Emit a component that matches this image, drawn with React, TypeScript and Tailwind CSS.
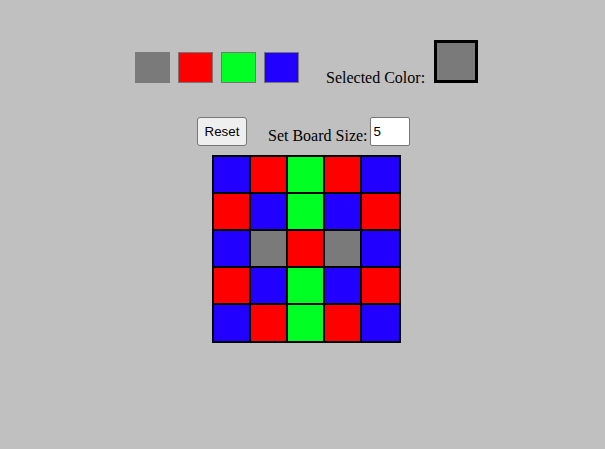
import React, { useState } from 'react';

const GRAY = '#7a7a7a';
const RED = '#ff0000';
const GREEN = '#00ff22';
const BLUE = '#2200ff';

const palette = [GRAY, RED, GREEN, BLUE];

const startBoard = [
  [BLUE, RED, GREEN, RED, BLUE],
  [RED, BLUE, GREEN, BLUE, RED],
  [BLUE, GRAY, RED, GRAY, BLUE],
  [RED, BLUE, GREEN, BLUE, RED],
  [BLUE, RED, GREEN, RED, BLUE],
];

function App() {
  const [selected, setSelected] = useState(GRAY);
  const [board, setBoard] = useState(startBoard);
  const [size, setSize] = useState('5');

  const paint = (r: number, c: number) => {
    setBoard(board.map((row, i) => row.map((cell, j) => (i === r && j === c ? selected : cell))));
  };

  return (
    <div className="min-h-[449px] bg-[#c0c0c0] text-black font-['Liberation_Serif',serif] text-[16px]">
      {/* palette row */}
      <div className="flex items-baseline pt-[40px] pl-[135px]">
        <div className="flex items-baseline gap-[8px]">
          {palette.map((color) => (
            <div
              key={color}
              onClick={() => setSelected(color)}
              className={`w-[35px] h-[31px] border ${color === GRAY ? 'border-[#7a7a7a]' : 'border-[#767676]'}`}
              style={{ backgroundColor: color }}
            />
          ))}
        </div>
        <span className="ml-[27px] leading-[18px]">Selected Color:</span>
        <div
          className="ml-[9px] w-[44px] h-[43px] border-[3px] border-black"
          style={{ backgroundColor: selected }}
        />
      </div>

      {/* controls row */}
      <div className="flex items-start mt-[30px] pl-[197px]">
        <button
          onClick={() => setBoard(startBoard)}
          className="w-[50px] h-[29px] bg-[#efefef] border border-[#767676] rounded-[3px] font-['Liberation_Sans',Arial,sans-serif] text-[13.33px]"
        >
          Reset
        </button>
        <span className="ml-[21px] mt-[10px] leading-[18px]">Set Board Size:</span>
        <input
          value={size}
          onChange={(e) => setSize(e.target.value)}
          className="ml-[2px] w-[40px] h-[29px] bg-white border border-[#767676] rounded-[2px] px-[3px] font-['Liberation_Sans',Arial,sans-serif] text-[13.33px] outline-none"
        />
      </div>

      {/* board */}
      <div className="mt-[9px] ml-[212px] grid w-fit grid-cols-[35px_35px_35px_35px_37px] grid-rows-[35px_35px_35px_35px_36px] gap-[2px] p-[2px] bg-black">
        {board.map((row, r) =>
          row.map((color, c) => (
            <div key={`${r}-${c}`} onClick={() => paint(r, c)} style={{ backgroundColor: color }} />
          ))
        )}
      </div>
    </div>
  );
}

export default App;
